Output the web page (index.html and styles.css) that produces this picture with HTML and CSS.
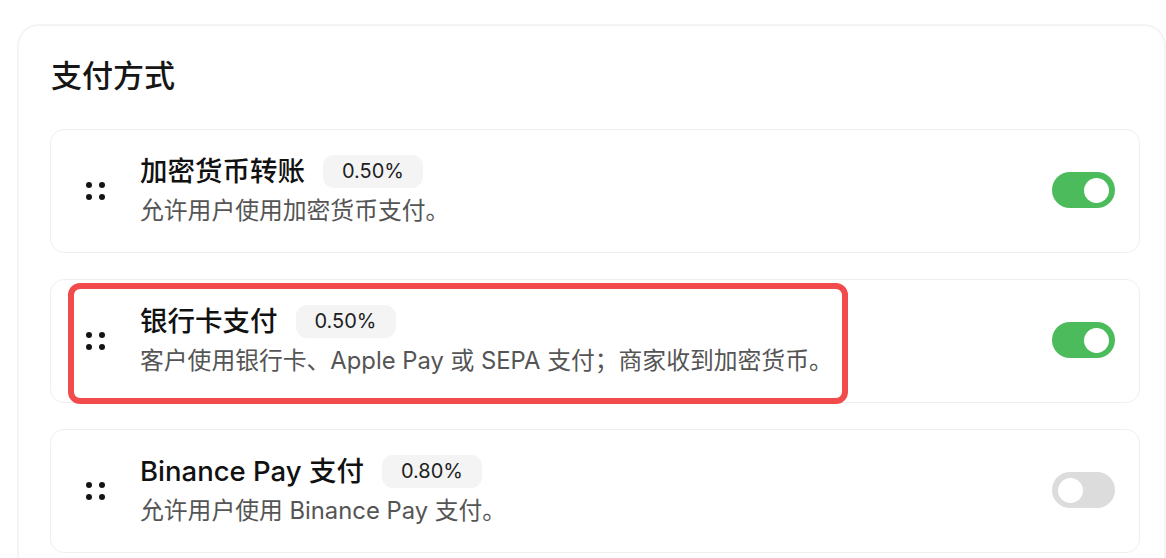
FILE: index.html
```html
<!DOCTYPE html>
<html lang="zh-CN">
<head>
<meta charset="utf-8">
<title>支付方式</title>
<link rel="stylesheet" href="styles.css">
</head>
<body>
<section class="panel">
  <h2 class="panel-title">支付方式</h2>
  <div class="list">
    <div class="row">
      <div class="handle"><span></span><span></span><span></span><span></span></div>
      <div class="info">
        <div class="head"><span class="name">加密货币转账</span><span class="badge">0.50%</span></div>
        <div class="desc">允许用户使用加密货币支付。</div>
      </div>
      <div class="toggle on"><span class="knob"></span></div>
    </div>
    <div class="row">
      <div class="handle"><span></span><span></span><span></span><span></span></div>
      <div class="info">
        <div class="head"><span class="name">银行卡支付</span><span class="badge">0.50%</span></div>
        <div class="desc">客户使用银行卡、Apple Pay 或 SEPA 支付；商家收到加密货币。</div>
      </div>
      <div class="toggle on"><span class="knob"></span></div>
      <div class="highlight"></div>
    </div>
    <div class="row">
      <div class="handle"><span></span><span></span><span></span><span></span></div>
      <div class="info">
        <div class="head"><span class="name">Binance Pay 支付</span><span class="badge">0.80%</span></div>
        <div class="desc">允许用户使用 Binance Pay 支付。</div>
      </div>
      <div class="toggle"><span class="knob"></span></div>
    </div>
  </div>
</section>
</body>
</html>
```
FILE: styles.css
```css
html, body {
  margin: 0;
  padding: 0;
  background: #ffffff;
  height: 558px;
  overflow: hidden;
}
body {
  font-family: Inter, "Noto Sans CJK SC", sans-serif;
  color: #1a1a1a;
}
.panel {
  margin: 24px 0 0 17px;
  width: 1149px;
  box-sizing: border-box;
  border: 2px solid #f4f4f4;
  border-radius: 22px;
  padding: 32px 0 40px 31px;
  background: #fff;
}
.panel-title {
  margin: 0 0 35px 1px;
  font-size: 31px;
  line-height: 36px;
  font-weight: 500;
  color: #161616;
}
.list {
  display: flex;
  flex-direction: column;
  gap: 26px;
  width: 1090px;
}
.row {
  position: relative;
  box-sizing: border-box;
  height: 124px;
  border: 1px solid #efefef;
  border-radius: 14px;
  display: flex;
  align-items: flex-start;
  padding: 24px 24px 0 35px;
  background: #fff;
}
.handle {
  width: 19px;
  height: 19px;
  display: grid;
  grid-template-columns: 6px 6px;
  grid-template-rows: 6px 6px;
  column-gap: 7px;
  row-gap: 6px;
  margin-top: 28px;
  margin-right: 35px;
}
.handle span {
  width: 6px;
  height: 6px;
  border-radius: 50%;
  background: #141414;
}
.info {
  flex: 1;
  display: flex;
  flex-direction: column;
}
.head {
  display: flex;
  align-items: center;
  gap: 18px;
  height: 34px;
}
.name {
  font-size: 27.5px;
  font-weight: 500;
  color: #111;
  line-height: 34px;
}
.badge {
  background: #f4f4f5;
  border-radius: 11px;
  height: 33px;
  line-height: 33px;
  padding: 0 19px;
  font-size: 20px;
  color: #1e1e1e;
}
.desc {
  margin-top: 10px;
  font-size: 23.8px;
  line-height: 26px;
  color: #555;
}
.toggle {
  width: 63px;
  height: 36px;
  border-radius: 18px;
  background: #dcdcdc;
  margin-top: 18px;
  position: relative;
  display: flex;
  align-items: center;
  padding: 0 6px;
  box-sizing: border-box;
  justify-content: flex-start;
}
.toggle.on {
  background: #4cbb5b;
  justify-content: flex-end;
}
.knob {
  width: 25px;
  height: 25px;
  border-radius: 50%;
  background: #fff;
}
.highlight {
  position: absolute;
  left: 17px;
  top: 3px;
  width: 780px;
  height: 121px;
  box-sizing: border-box;
  border: 6px solid #f24b4b;
  border-radius: 12px;
  pointer-events: none;
}
```
